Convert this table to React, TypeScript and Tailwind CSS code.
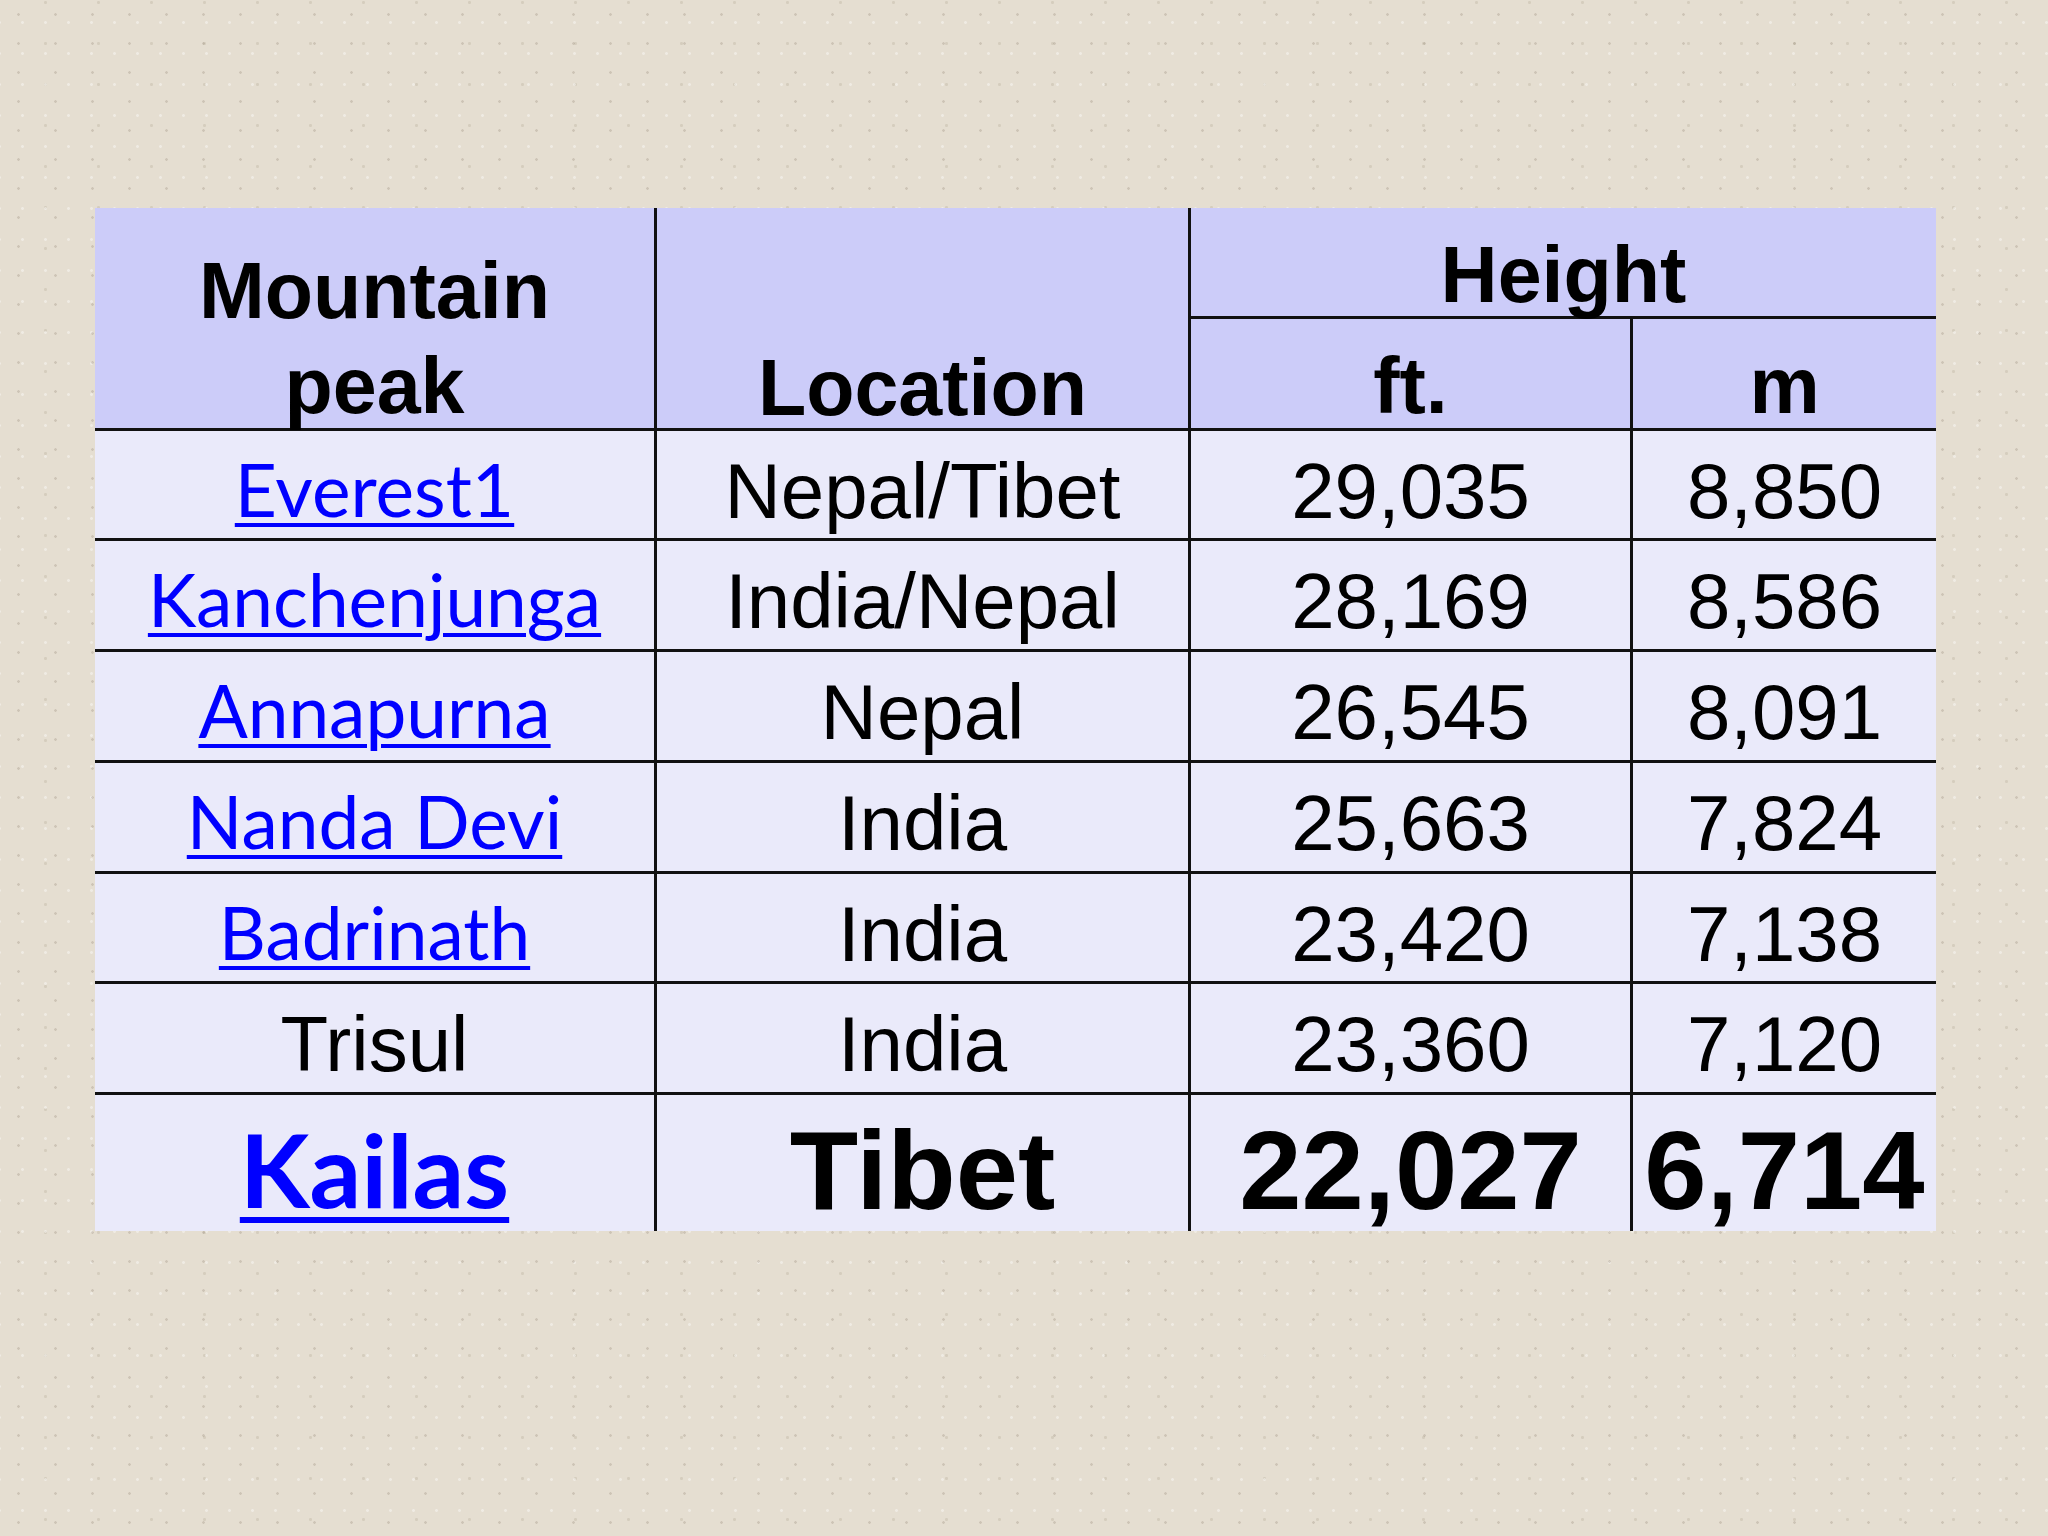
import React from 'react';

const rows = [
  { peak: 'Everest1', link: true, loc: 'Nepal/Tibet', ft: '29,035', m: '8,850' },
  { peak: 'Kanchenjunga', link: true, loc: 'India/Nepal', ft: '28,169', m: '8,586' },
  { peak: 'Annapurna', link: true, loc: 'Nepal', ft: '26,545', m: '8,091' },
  { peak: 'Nanda Devi', link: true, loc: 'India', ft: '25,663', m: '7,824' },
  { peak: 'Badrinath', link: true, loc: 'India', ft: '23,420', m: '7,138' },
  { peak: 'Trisul', link: false, loc: 'India', ft: '23,360', m: '7,120' },
];

const arial = "font-['Liberation_Sans',Arial,sans-serif]";
const lato = "font-['Lato','Open_Sans',sans-serif]";

export default function App() {
  return (
    <div className="min-h-screen w-full bg-[#e5ded1] bg-[radial-gradient(circle,rgba(120,108,88,0.22)_1px,transparent_1.6px),radial-gradient(circle,rgba(255,255,255,0.4)_1px,transparent_1.8px),radial-gradient(circle,rgba(140,128,105,0.18)_1.2px,transparent_1.8px)] bg-[length:37px_29px,23px_31px,53px_41px] bg-[position:0_0,11px_7px,19px_23px] pt-[208px] pl-[95px]">
      <div className="grid w-[1841px] grid-cols-[562px_534px_442px_303px] grid-rows-[111px_112px_110px_111px_111px_111px_110px_111px_136px] text-black">
        {/* header */}
        <div className={`row-span-2 bg-[#ccccf9] border-b-[3px] border-r-[3px] border-[#111] pt-[35px] text-center text-[79px] font-bold leading-[95px] ${arial}`}>
          Mountain
          <br />
          peak
        </div>
        <div className={`row-span-2 bg-[#ccccf9] border-b-[3px] border-r-[3px] border-[#111] pt-[140px] text-center text-[79px] font-bold leading-none ${arial}`}>
          Location
        </div>
        <div className={`col-span-2 bg-[#ccccf9] border-b-[3px] border-[#111] pt-[27px] text-center text-[79px] font-bold leading-none ${arial}`}>
          Height
        </div>
        <div className={`bg-[#ccccf9] border-b-[3px] border-r-[3px] border-[#111] pt-[27px] text-center text-[79px] font-bold leading-none ${arial}`}>
          ft.
        </div>
        <div className={`bg-[#ccccf9] border-b-[3px] border-[#111] pt-[27px] text-center text-[79px] font-bold leading-none ${arial}`}>
          m
        </div>

        {/* body */}
        {rows.map((r) => (
          <React.Fragment key={r.peak}>
            {r.link ? (
              <div className={`bg-[#eaeafa] border-b-[3px] border-r-[3px] border-[#111] pt-[22px] text-center text-[73px] leading-none ${lato}`}>
                <a href="#" className="text-[#0000ff] underline decoration-[4px] underline-offset-[6px]">
                  {r.peak}
                </a>
              </div>
            ) : (
              <div className={`bg-[#eaeafa] border-b-[3px] border-r-[3px] border-[#111] pt-[21px] text-center text-[78px] leading-none ${arial}`}>
                {r.peak}
              </div>
            )}
            <div className={`bg-[#eaeafa] border-b-[3px] border-r-[3px] border-[#111] pt-[21px] text-center text-[78px] leading-none ${arial}`}>
              {r.loc}
            </div>
            <div className={`bg-[#eaeafa] border-b-[3px] border-r-[3px] border-[#111] pt-[21px] text-center text-[78px] leading-none ${arial}`}>
              {r.ft}
            </div>
            <div className={`bg-[#eaeafa] border-b-[3px] border-[#111] pt-[21px] text-center text-[78px] leading-none ${arial}`}>
              {r.m}
            </div>
          </React.Fragment>
        ))}

        {/* last row */}
        <div className={`bg-[#eaeafa] border-r-[3px] border-[#111] pt-[23px] text-center text-[102px] font-bold leading-none ${lato}`}>
          <a href="#" className="text-[#0000ff] underline decoration-[6px] underline-offset-[9px]">
            Kailas
          </a>
        </div>
        <div className={`bg-[#eaeafa] border-r-[3px] border-[#111] pt-[20px] text-center text-[112px] font-bold leading-none ${arial}`}>
          Tibet
        </div>
        <div className={`bg-[#eaeafa] border-r-[3px] border-[#111] pt-[20px] text-center text-[112px] font-bold leading-none ${arial}`}>
          22,027
        </div>
        <div className={`bg-[#eaeafa] pt-[20px] text-center text-[112px] font-bold leading-none whitespace-nowrap ${arial}`}>
          6,714
        </div>
      </div>
    </div>
  );
}
